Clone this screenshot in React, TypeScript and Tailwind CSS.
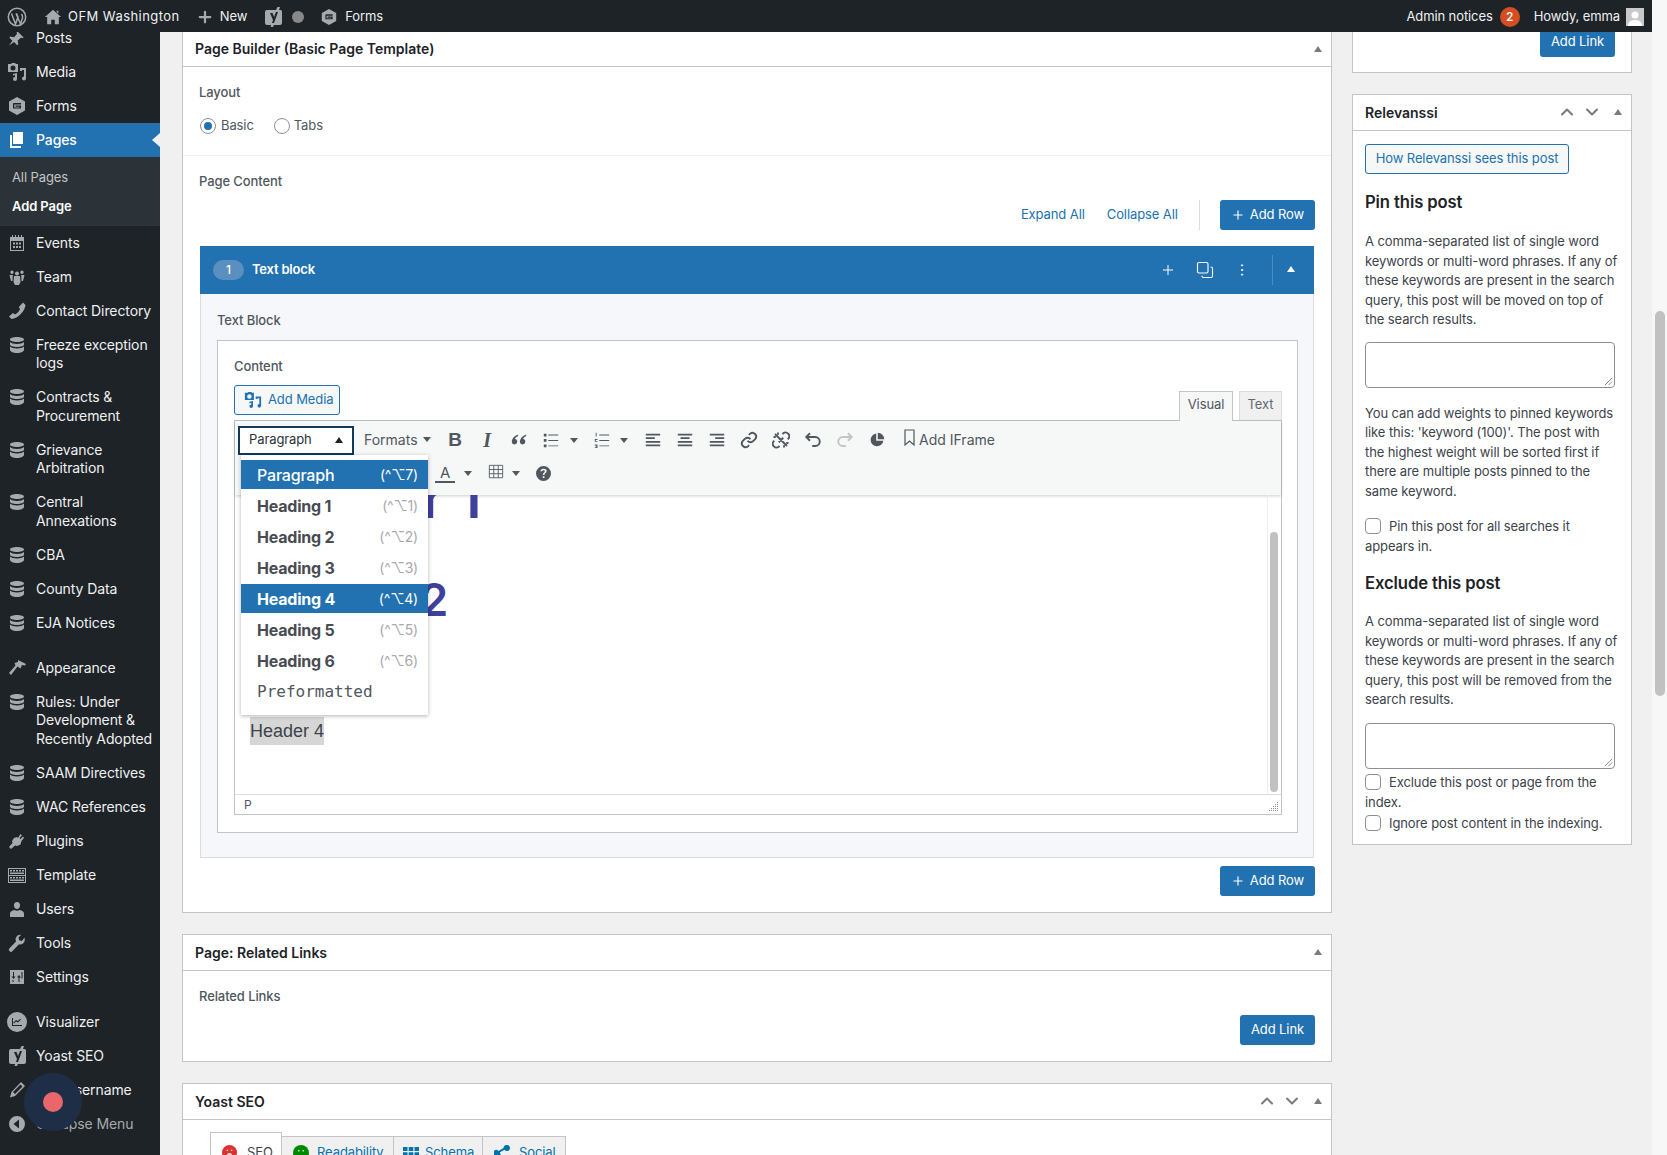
import { ChevronDown, ChevronUp, Copy, MoreVertical, Plus } from 'lucide-react';
import type { ReactNode } from 'react';

const blue = 'bg-[#2271b1]';

function Db() {
  return (
    <svg viewBox="0 0 20 20" className="h-5 w-5 fill-[#a7aaad]">
      <path d="M3 4.500C3 3 6 2 10 2s7 1 7 2.500S14 7 10 7 3 6 3 4.500zM3 7c1 1.300 4 2 7 2s6-.7 7-2v2.500C17 11 14 12 10 12S3 11 3 9.500zM3 11.500c1 1.300 4 2 7 2s6-.7 7-2V15c0 1.500-3 3-7 3s-7-1.500-7-3z" />
    </svg>
  );
}

function Icon({ d }: { d: string }) {
  return (
    <svg viewBox="0 0 20 20" className="h-5 w-5 fill-[#a7aaad]">
      <path fillRule="evenodd" d={d} />
    </svg>
  );
}

function MediaIcon({ cls }: { cls: string }) {
  return (
    <svg viewBox="0 0 20 20" className={cls}>
      <path fillRule="evenodd" d="M1 2h3l1-1h3l1 1h2v8H1zM6 3.500a2.500 2.500 0 1 0 0 5 2.500 2.500 0 0 0 0-5z" />
      <path d="M13 6h6v10.500a2 2 0 1 1-2-2V8h-2v1h-2zM6 12l4-1v6a2 2 0 1 1-2-2v-2l-2 .5z" />
    </svg>
  );
}

function FormsIcon({ cls }: { cls: string }) {
  return (
    <svg viewBox="0 0 20 20" className={cls}>
      <path fillRule="evenodd" d="M10 1l8 4.500v9L10 19l-8-4.500v-9zM6 8v4.500h8V9.500H8.500v1.200h4v.7H7.300V8.500H14V7H7a1 1 0 0 0-1 1z" />
    </svg>
  );
}

function YoastIcon({ cls }: { cls: string }) {
  return (
    <svg viewBox="0 0 20 20" className={cls}>
      <path fillRule="evenodd" d="M4 3h9l1.500-3h2.500l-1 3h1.500A1.500 1.500 0 0 1 19 4.500V16a2 2 0 0 1-2 2h-6l-1 2H7.500l.7-2H4a2 2 0 0 1-2-2V5a2 2 0 0 1 2-2zM7 6l3 7-1 3h2l4-11h-2l-2 5-1.500-4z" />
    </svg>
  );
}

function MenuItem({ icon, label, active }: { icon: ReactNode; label: ReactNode; active?: boolean }) {
  return (
    <li className={`relative flex gap-[9px] py-[7.825px] pl-[7px] text-[14px] leading-[18.400px] ${active ? `${blue} font-medium text-white` : 'text-[#f0f0f1]'}`}>
      <span className="flex h-[18px] w-5 shrink-0 items-center justify-center">{icon}</span>
      <span>{label}</span>
      {active && <span className="absolute right-0 top-[10px] h-0 w-0 border-y-[7px] border-r-[8px] border-y-transparent border-r-[#f0f0f1]" />}
    </li>
  );
}

function Sidebar() {
  return (
    <aside className="relative w-[160px] shrink-0 overflow-hidden bg-[#1d2327]">
      <ul className="-mt-[11px]">
        <MenuItem label="Posts" icon={<Icon d="M10.400 3.300l6.300 6.300-1.500.6-1-.6-3.500 3 .6 3.700-1.200 1-3-3.200L2 17.500l3.400-4.700-3-3 1-1.200 3.700.6 3-3.400-.6-1z" />} />
        <MenuItem label="Media" icon={<MediaIcon cls="h-5 w-5 fill-[#a7aaad]" />} />
        <MenuItem label="Forms" icon={<FormsIcon cls="h-5 w-5 fill-[#a7aaad]" />} />
        <MenuItem
          active
          label="Pages"
          icon={
            <svg viewBox="0 0 20 20" className="h-5 w-5 fill-white">
              <path d="M6 2h10v12H6zM3 5h2v11h9v2H3z" />
            </svg>
          }
        />
        <ul className="bg-[#2c3338] pb-[6px] pt-[5px] text-[13px] leading-[18px]">
          <li className="px-3 py-[5.500px] text-[#c3c4c7]">All Pages</li>
          <li className="px-3 py-[5.500px] font-semibold text-white">Add Page</li>
        </ul>
        <MenuItem label="Events" icon={<Icon d="M3 4h2V2h1v2h2V2h1v2h2V2h1v2h2V2h1v2h2v14H3zM4 8v9h12V8zM6 9.500h2v2H6zm3 0h2v2H9zm3 0h2v2h-2zM6 13h2v2H6zm3 0h2v2H9zm3 0h2v2h-2z" />} />
        <MenuItem label="Team" icon={<Icon d="M10 4.500a2 2 0 1 1 0 4 2 2 0 0 1 0-4zM5 3.500a1.700 1.700 0 1 1 0 3.400 1.700 1.700 0 0 1 0-3.400zM15 3.500a1.700 1.700 0 1 1 0 3.400 1.700 1.700 0 0 1 0-3.400zM7 9h6l.5 6-1.500 3H8l-1.500-3zM2.500 8h3.300L5.500 14H4zM14.200 8h3.300L16 14h-1.500z" />} />
        <MenuItem label="Contact Directory" icon={<Icon d="M16 1.500l2.500 2.500c-.5 6-7.500 13.500-14 14L2 15.500 6 12l2 1.500c2-1 4.500-3.500 5-5.500L11.800 6z" />} />
        <MenuItem label="Freeze exception logs" icon={<Db />} />
        <MenuItem label="Contracts & Procurement" icon={<Db />} />
        <MenuItem label="Grievance Arbitration" icon={<Db />} />
        <MenuItem label="Central Annexations" icon={<Db />} />
        <MenuItem label="CBA" icon={<Db />} />
        <MenuItem label="County Data" icon={<Db />} />
        <MenuItem label="EJA Notices" icon={<Db />} />
        <li className="h-[11px]" />
        <MenuItem label="Appearance" icon={<Icon d="M11 2l8 4-1 1.500-3-.5-1.500 3.500-3-2L4 17l-2-2 6.500-7.500-1-2.500L11 4z" />} />
        <MenuItem label={<>Rules: Under Development &amp; Recently Adopted</>} icon={<Db />} />
        <MenuItem label="SAAM Directives" icon={<Db />} />
        <MenuItem label="WAC References" icon={<Db />} />
        <MenuItem label="Plugins" icon={<Icon d="M13.500 3l1.500 1.500-2.500 2.500 1 1 2.500-2.500L17 7l-2.500 3-1 3.500-3.500 1.500-2-.5L4 18l-2-2 3.500-4-.5-2 2-3 3-1 1 1z" />} />
        <MenuItem label="Template" icon={<Icon d="M1 3h18v15H1zM2 4v6h16V4zM2 11v6h16v-6zM3 5h2v1.500H3zm3 0h2v1.500H6zm3 0h2v1.500H9zm3 0h2v1.500h-2zm3 0h2v1.500h-2zM3 7.500h14V9H3zM3 12h2v1.500H3zm3 0h2v1.500H6zm3 0h2v1.500H9zm3 0h2v1.500h-2zm3 0h2v1.500h-2zM3 14.500h14V16H3z" />} />
        <MenuItem label="Users" icon={<Icon d="M10 3a3 3 0 0 1 3 3.500c0 2-1.300 3.500-3 3.500S7 8.500 7 6.500A3 3 0 0 1 10 3zM3 18v-3.500c0-2 2-3 4.500-3.500 1.500 1 3.500 1 5 0 2.500.5 4.500 1.500 4.500 3.500V18z" />} />
        <MenuItem label="Tools" icon={<Icon d="M17.500 4.500l.3 2.500a4.500 4.500 0 0 1-5.800 4.200L5.500 18a2 2 0 0 1-3.200-2.500L9 8.500A4.500 4.500 0 0 1 14 2l-2.500 2.500.7 2.700 2.700.7z" />} />
        <MenuItem label="Settings" icon={<Icon d="M3 3h14v14H3zM6 5v4.500H4.500L6.500 12l2-2.500H7V5zm5.500 10h1v-4.500H14L12 8l-2 2.500h1.500zm3-10v6.500h1V5zm-9 8v2h1v-2z" />} />
        <li className="h-[11px]" />
        <MenuItem label="Visualizer" icon={<Icon d="M10 0a10 10 0 1 1 0 20 10 10 0 0 1 0-20zM5 6v8h10v-1H6V6zm2 5.500l2-2 2 1 3-3-.7-.7L11 9l-2-1-2.700 2.700z" />} />
        <MenuItem label="Yoast SEO" icon={<YoastIcon cls="h-5 w-5 fill-[#a7aaad]" />} />
        <MenuItem label="Edit Username" icon={<Icon d="M14 2l4 4-10 10-5 1.500L4.500 12zM13.500 4.500L6 12l2 2 7.500-7.500z" />} />
        <li className="flex gap-[9px] py-[7.825px] pl-[7px] text-[14px] leading-[18.400px] text-[#a7aaad]">
          <span className="flex h-[18px] w-5 items-center justify-center">
            <Icon d="M10 2a8 8 0 1 1 0 16 8 8 0 0 1 0-16zm2 3.500L6.500 10l5.500 4.500z" />
          </span>
          Collapse Menu
        </li>
      </ul>
      <div className="absolute left-[24px] top-[1041px] flex h-[58px] w-[58px] items-center justify-center rounded-full bg-[#1f2e47]">
        <div className="h-5 w-5 rounded-full bg-[#e9666a]" />
      </div>
    </aside>
  );
}

function TopBar() {
  return (
    <header className="relative z-10 flex h-8 shrink-0 items-center bg-[#1d2327] pt-px text-[13px] text-[#f0f0f1]">
      <svg viewBox="0 0 20 20" className="ml-[7px] h-5 w-5 fill-none stroke-[#a7aaad] stroke-[1.500]">
        <circle cx="10" cy="10" r="8.700" />
        <path d="M4.500 6.500l4 10.500 2.500-7-1.500-3.500M9 6.500l4.500 10.500 2-6c.5-2-.5-3-1-4" />
      </svg>
      <svg viewBox="0 0 20 20" className="ml-[17px] h-[18px] w-[18px] fill-[#a7aaad]">
        <path d="M10 2l9 8h-2.500v8H12v-5H8v5H3.500v-8H1zM14 3h2v3l-2-1.500z" />
      </svg>
      <span className="ml-[6px] tracking-[0.450px]">OFM Washington</span>
      <Plus size={18} strokeWidth={3} className="ml-[16px] text-[#a7aaad]" />
      <span className="ml-[6px]">New</span>
      <YoastIcon cls="ml-[16px] h-5 w-5 fill-[#a7aaad]" />
      <span className="ml-[9px] h-3 w-3 rounded-full bg-[#888]" />
      <FormsIcon cls="ml-[16px] h-[18px] w-[18px] fill-[#a7aaad]" />
      <span className="ml-[7px]">Forms</span>
      <div className="ml-auto flex items-center pr-[8px]">
        <span>Admin notices</span>
        <span className="ml-[7px] flex h-5 w-5 items-center justify-center rounded-full bg-[#d54e21] text-[12px] font-medium text-white">2</span>
        <span className="ml-[14px]">Howdy, emma</span>
        <span className="ml-[6px] flex h-[18px] w-[18px] items-end justify-center bg-[#c9c9c9]">
          <svg viewBox="0 0 18 18" className="h-[18px] w-[18px] fill-white">
            <circle cx="9" cy="7" r="3.500" />
            <path d="M2 18c0-4 3-6 7-6s7 2 7 6z" />
          </svg>
        </span>
      </div>
    </header>
  );
}

function Caret({ up = true, cls = 'border-b-[#50575e]' }: { up?: boolean; cls?: string }) {
  return up ? (
    <span className={`inline-block h-0 w-0 border-x-[4px] border-b-[6px] border-x-transparent ${cls}`} />
  ) : (
    <span className="inline-block h-0 w-0 border-x-[4px] border-t-[5px] border-x-transparent border-t-[#50575e]" />
  );
}

function CardHead({ title, arrows, first }: { title: string; arrows?: boolean; first?: boolean }) {
  return (
    <div className={`flex ${first ? 'h-[35px]' : 'h-[36px]'} items-center border-b border-[#c3c4c7] pb-px pl-3 pr-[9px] text-[14px] font-semibold tracking-normal text-[#1d2327]`}>
      <span>{title}</span>
      <div className="ml-auto flex items-center gap-[5px] text-[#787c82]">
        {arrows && <ChevronUp size={20} strokeWidth={2.500} />}
        {arrows && <ChevronDown size={20} strokeWidth={2.500} />}
        <span className="ml-[7px] inline-flex"><Caret cls="border-b-[#787c82]" /></span>
      </div>
    </div>
  );
}

function AddBtn({ children, plus }: { children: string; plus?: boolean }) {
  return (
    <button type="button" className={`flex h-[30px] items-center gap-[5px] rounded-[3px] ${blue} px-[11px] text-[13px] text-white`}>
      {plus && <Plus size={14} strokeWidth={2} />}
      {children}
    </button>
  );
}

function ToolIcon({ children }: { children: ReactNode }) {
  return <span className="flex h-[28px] w-[32px] shrink-0 items-center justify-center text-[#50575e]">{children}</span>;
}

function Lines({ kind }: { kind: 'left' | 'center' | 'right' }) {
  const d = {
    left: 'M2 3h16v2H2zM2 7h10v2H2zM2 11h16v2H2zM2 15h16v2H2z',
    center: 'M2 3h16v2H2zM5 7h10v2H5zM2 11h16v2H2zM2 15h16v2H2z',
    right: 'M2 3h16v2H2zM8 7h10v2H8zM2 11h16v2H2zM2 15h16v2H2z',
  }[kind];
  return (
    <svg viewBox="0 0 20 20" className="h-[18px] w-[18px] fill-[#50575e]">
      <path d={d} />
    </svg>
  );
}

function Toolbar() {
  return (
    <div className="h-[74px] bg-[#f6f7f7] shadow-[0_1px_3px_rgba(0,0,0,0.2)]">
      <div className="flex h-[38px] items-center pl-[3px]">
        <div className="flex h-[29px] w-[116px] items-center justify-between border-2 border-[#0f3a5c] bg-white px-[9px] text-[13px] text-[#2c3338]">
          Paragraph
          <Caret cls="border-b-[#1d2327]" />
        </div>
        <span className="mb-px ml-[10px] flex w-[75px] items-center gap-[5px] text-[14px] tracking-normal text-[#50575e]">
          Formats <Caret up={false} />
        </span>
        <ToolIcon><span className="font-['Liberation_Sans',sans-serif] text-[19px] font-bold">B</span></ToolIcon>
        <ToolIcon><span className="font-['Liberation_Serif',serif] text-[20px] font-bold italic">I</span></ToolIcon>
        <ToolIcon>
          <svg viewBox="0 0 20 20" className="h-[18px] w-[18px] fill-[#50575e]"><path d="M9 4C6 5 2 8 2 12a3 3 0 1 0 3.500-3c0-1 1.500-2.500 3.500-3.500zM18 4c-3 1-7 4-7 8a3 3 0 1 0 3.500-3c0-1 1.500-2.500 3.500-3.500z" /></svg>
        </ToolIcon>
        <ToolIcon>
          <svg viewBox="0 0 20 20" className="h-[18px] w-[18px] fill-[#50575e]"><path d="M2 3h3v3H2zM7 4h11v1H7zM2 9h3v3H2zM7 10h11v1H7zM2 15h3v3H2zM7 16h11v1H7z" /></svg>
        </ToolIcon>
        <span className="ml-[2px] flex w-[10px] justify-center"><Caret up={false} /></span>
        <span className="ml-[7px]"><ToolIcon>
          <svg viewBox="0 0 20 20" className="h-[18px] w-[18px] fill-[#50575e]"><path d="M3 2h1v4H3zM2 9h3v1H3v1h2v1H2zM2 15h3v4H2v-1h2v-.5H3v-1h1V16H2zM7 4h11v1H7zM7 10h11v1H7zM7 16h11v1H7z" /></svg>
        </ToolIcon></span>
        <span className="ml-px flex w-[10px] justify-center"><Caret up={false} /></span>
        <span className="ml-[8px] flex items-center">
          <ToolIcon><Lines kind="left" /></ToolIcon>
          <ToolIcon><Lines kind="center" /></ToolIcon>
          <ToolIcon><Lines kind="right" /></ToolIcon>
        </span>
        <ToolIcon>
          <svg viewBox="0 0 24 24" className="h-[18px] w-[18px] fill-none stroke-[#50575e] stroke-[2.500]"><path d="M10 13a5 5 0 0 0 7.500.5l3-3a5 5 0 0 0-7-7l-1.700 1.700" /><path d="M14 11a5 5 0 0 0-7.500-.5l-3 3a5 5 0 0 0 7 7l1.700-1.700" /></svg>
        </ToolIcon>
        <ToolIcon>
          <svg viewBox="0 0 24 24" className="h-[18px] w-[18px] fill-none stroke-[#50575e] stroke-[2.500]"><path d="M14 4l1-1a5 5 0 0 1 7 7l-1 1M10 20l-1 1a5 5 0 0 1-7-7l1-1M9 15l6-6M4 4l16 16M8 2v3M2 8h3M16 22v-3M22 16h-3" /></svg>
        </ToolIcon>
        <ToolIcon>
          <svg viewBox="0 0 24 24" className="h-[18px] w-[18px] fill-none stroke-[#50575e] stroke-[2.500]"><path d="M8 3L3 8l5 5M3 8h12a6 6 0 0 1 0 12h-4" /></svg>
        </ToolIcon>
        <ToolIcon>
          <svg viewBox="0 0 24 24" className="h-[18px] w-[18px] fill-none stroke-[#c3c4c7] stroke-[2.500]"><path d="M16 3l5 5-5 5M21 8H9a6 6 0 0 0 0 12h4" /></svg>
        </ToolIcon>
        <ToolIcon>
          <svg viewBox="0 0 20 20" className="h-4 w-4 fill-[#50575e]"><path d="M9 2v9h9a8 8 0 1 1-9-9zM11 1a8 8 0 0 1 8 8h-8z" /></svg>
        </ToolIcon>
        <span className="mb-px ml-[11px] flex items-center gap-1 text-[14px] tracking-normal text-[#50575e]">
          <svg viewBox="0 0 11 17" className="mb-1 h-[17px] w-[11px] fill-none stroke-[#50575e] stroke-[1.200]"><path d="M1 1h9v15l-4.500-4L1 16z" /></svg>
          Add IFrame
        </span>
      </div>
      <div className="flex h-[29px] items-center pl-[200px]">
        <span className="flex w-5 flex-col items-center text-[15px] leading-[17px] text-[#50575e]">
          A
          <span className="h-[2px] w-5 bg-[#50575e]" />
        </span>
        <span className="ml-[9px] inline-flex"><Caret up={false} /></span>
        <svg viewBox="0 0 18 18" className="mb-1 ml-[16px] h-4 w-4 fill-none stroke-[#50575e]">
          <path d="M1.500 1.500h15v14h-15zM1.500 6.200h15M1.500 10.900h15M6.500 1.500v14M11.500 1.500v14" />
        </svg>
        <span className="ml-[8px] inline-flex"><Caret up={false} /></span>
        <svg viewBox="0 0 20 20" className="ml-[16px] h-[15px] w-[15px] fill-[#50575e]">
          <path fillRule="evenodd" d="M10 0a10 10 0 1 1 0 20 10 10 0 0 1 0-20zM9 12h2.200c0-2.500 3-2.500 3-5.200C14.200 4.500 12.400 3.500 10 3.500S6 4.800 5.800 7h2.400c.1-1 .8-1.500 1.800-1.500s1.800.5 1.800 1.400C12 8.500 9 9 9 12zm0 1.500V16h2.300v-2.500z" />
        </svg>
      </div>
    </div>
  );
}

const formats = [
  { label: 'Paragraph', key: '(^⌥7)', cls: 'font-medium text-white', on: true },
  { label: 'Heading 1', key: '(^⌥1)', cls: 'font-bold text-[#484c52]' },
  { label: 'Heading 2', key: '(^⌥2)', cls: 'font-bold text-[#484c52]' },
  { label: 'Heading 3', key: '(^⌥3)', cls: 'font-bold text-[#484c52]' },
  { label: 'Heading 4', key: '(^⌥4)', cls: 'font-bold text-white', on: true },
  { label: 'Heading 5', key: '(^⌥5)', cls: 'font-bold text-[#484c52]' },
  { label: 'Heading 6', key: '(^⌥6)', cls: 'font-bold text-[#484c52]' },
];

function FormatMenu() {
  return (
    <div className="absolute left-[6px] top-[34px] z-10 w-[187px] bg-white pb-[9px] pt-[5px] shadow-[0_1px_4px_rgba(0,0,0,0.3)]">
      {formats.map((f) => (
        <div key={f.label} className={`mb-[2px] flex h-[29px] items-center justify-between pl-4 pr-[10px] text-[16px] tracking-[-0.200px] ${f.on ? blue : ''} ${f.cls}`}>
          {f.label}
          <span className={`text-[14px] font-normal ${f.on ? 'text-white' : 'text-[#a7aaad]'}`}>{f.key}</span>
        </div>
      ))}
      <div className="flex h-[29px] items-center pl-4 font-['DejaVu_Sans_Mono',monospace] text-[16px] tracking-normal text-[#50575e]">Preformatted</div>
    </div>
  );
}

function Editor() {
  return (
    <div className="relative h-[395px] border border-[#c3c4c7]">
      <Toolbar />
      <FormatMenu />
      <div className="flex h-[300px] overflow-hidden border-b border-[#dcdcde]">
        <div className="min-w-0 flex-1 pl-[15px] font-semibold tracking-normal text-[#3f3f9c]">
          <div className="-mt-[30px] h-[66px] whitespace-nowrap text-[55px] leading-[66px]">Header 1</div>
          <div className="mt-[41px] h-[56px] whitespace-nowrap text-[45px] leading-[56px]">Header 2</div>
          <div className="mt-[22px] h-[36px] text-[24px] leading-[36px]">Header 3</div>
          <div className="mt-[31px] w-fit bg-[#d6d6d6] font-['Liberation_Sans',sans-serif] text-[18px] font-normal leading-[28px] text-[#3c434a]">Header 4</div>
        </div>
        <div className="w-[14px] shrink-0 border-l border-[#eee] px-[2px] pt-[37px]">
          <div className="h-[260px] w-[8px] rounded-full bg-[#c1c1c1]" />
        </div>
      </div>
      <div className="relative flex h-[19px] items-center pl-[9px] text-[12px] text-[#50575e]">
        P
        <svg viewBox="0 0 10 10" className="absolute bottom-[2px] right-[2px] h-[10px] w-[10px] fill-[#8c8f94]">
          <path d="M8 0h1v1H8zM6 2h1v1H6zM8 2h1v1H8zM4 4h1v1H4zM6 4h1v1H6zM8 4h1v1H8zM2 6h1v1H2zM4 6h1v1H4zM6 6h1v1H6zM8 6h1v1H8zM0 8h1v1H0zM2 8h1v1H2zM4 8h1v1H4zM6 8h1v1H6zM8 8h1v1H8z" />
        </svg>
      </div>
    </div>
  );
}

function PageBuilder() {
  return (
    <section className="h-[881px] border border-t-0 border-[#c3c4c7] bg-white">
      <CardHead title="Page Builder (Basic Page Template)" first />
      <div className="h-[89px] border-b border-[#f0f0f1] px-4 pt-[15px] text-[13px] text-[#50575e]">
        <div className="font-medium leading-[20px]">Layout</div>
        <div className="ml-px mt-[14px] flex items-center">
          <span className="flex h-4 w-4 items-center justify-center rounded-full border border-[#8c8f94]">
            <span className="h-2 w-2 rounded-full bg-[#2271b1]" />
          </span>
          <span className="ml-[5px]">Basic</span>
          <span className="ml-[20px] h-4 w-4 rounded-full border border-[#8c8f94]" />
          <span className="ml-[4px]">Tabs</span>
        </div>
      </div>
      <div className="px-4 pt-[15px]">
        <div className="text-[13px] font-medium leading-[20px] text-[#50575e]">Page Content</div>
        <div className="mt-[9px] flex h-[30px] items-center justify-end text-[13px] text-[#2271b1]">
          <span>Expand All</span>
          <span className="ml-[22px]">Collapse All</span>
          <span className="ml-[21px] mr-[20px] h-[30px] w-px bg-[#dcdcde]" />
          <AddBtn plus>Add Row</AddBtn>
        </div>
        <div className="ml-px mt-[16px] w-[1114px] border border-t-0 border-[#dcdcde] bg-[#f6f7fb]">
          <div className={`-mx-px flex h-[48px] items-center ${blue} pl-[13px] pr-[19px] text-white`}>
            <span className="flex h-5 w-[31px] items-center justify-center rounded-full bg-[#5a8fbf] text-[12px] font-medium">1</span>
            <span className="ml-[8px] text-[13px] font-semibold tracking-[-0.200px]">Text block</span>
            <div className="ml-auto flex items-center">
              <Plus size={16} strokeWidth={1.500} />
              <Copy size={18} strokeWidth={1.500} className="ml-[20px] -scale-x-100 -scale-y-100" />
              <MoreVertical size={16} strokeWidth={1.500} className="ml-[20px]" />
              <span className="ml-[22px] h-[30px] w-px bg-[#4a8bc0]" />
              <span className="mb-[3px] ml-[14px] inline-flex"><Caret cls="border-b-white" /></span>
            </div>
          </div>
          <div className="h-[563px] pl-4 pr-[15px] pt-[16px]">
            <div className="text-[13px] font-medium leading-[20px] text-[#50575e]">Text Block</div>
            <div className="mt-[10px] h-[493px] border border-[#c3c4c7] bg-white pl-4 pr-[15px] pt-[15px]">
              <div className="text-[13px] font-medium leading-[20px] text-[#50575e]">Content</div>
              <div className="flex items-end justify-between">
                <button type="button" className="mb-[5px] mt-[9px] flex h-[30px] w-[106px] items-center gap-[6px] rounded-[3px] border border-[#2271b1] bg-[#f6f7f7] pl-[9px] text-[13px] text-[#2271b1]">
                  <MediaIcon cls="h-[18px] w-[18px] fill-[#2271b1]" />
                  Add Media
                </button>
                <div className="-mb-px flex items-end text-[13px] text-[#50575e]">
                  <span className="z-10 flex h-[30px] w-[54px] items-center justify-center border border-b-0 border-[#c3c4c7] bg-[#f6f7f7] pb-[3px]">Visual</span>
                  <span className="ml-[6px] flex h-[30px] w-[43px] items-center justify-center border border-[#dcdcde] bg-[#f0f0f1] pb-[3px] text-[#646970]">Text</span>
                </div>
              </div>
              <Editor />
            </div>
          </div>
        </div>
        <div className="mt-[8px] flex justify-end">
          <AddBtn plus>Add Row</AddBtn>
        </div>
      </div>
    </section>
  );
}

function SideCheck({ children }: { children: ReactNode }) {
  return (
    <div className="text-[13px] leading-[20px] text-[#3c434a]">
      <span className="mr-2 inline-block h-4 w-4 translate-y-[3px] rounded-[4px] border border-[#8c8f94] bg-white" />
      {children}
    </div>
  );
}

function SideArea() {
  return (
    <div className="relative h-[46px] w-[250px] rounded-[4px] border border-[#8c8f94]">
      <svg viewBox="0 0 10 10" className="absolute bottom-px right-px h-[9px] w-[9px] fill-none stroke-[#787c82]">
        <path d="M1 9l8-8M5 9l4-4" />
      </svg>
    </div>
  );
}

function Relevanssi() {
  return (
    <section className="mt-[21px] h-[751px] border border-[#c3c4c7] bg-white">
      <CardHead title="Relevanssi" arrows />
      <div className="px-3 pt-[13px] text-[13px] leading-[19.500px] text-[#3c434a]">
        <button type="button" className="block h-[30px] w-[204px] rounded-[3px] border border-[#2271b1] bg-[#f6f7f7] text-[13px] text-[#2271b1]">How Relevanssi sees this post</button>
        <h3 className="mt-[16px] text-[16.640px] font-semibold leading-[24px] text-[#1d2327]">Pin this post</h3>
        <p className="mt-[18px]">A comma-separated list of single word keywords or multi-word phrases. If any of these keywords are present in the search query, this post will be moved on top of the search results.</p>
        <div className="mt-[12px]"><SideArea /></div>
        <p className="mt-[16px]">You can add weights to pinned keywords like this: 'keyword (100)'. The post with the highest weight will be sorted first if there are multiple posts pinned to the same keyword.</p>
        <div className="mt-[14px]"><SideCheck>Pin this post for all searches it appears in.</SideCheck></div>
        <h3 className="mt-[15px] text-[16.640px] font-semibold leading-[24px] text-[#1d2327]">Exclude this post</h3>
        <p className="mt-[17px]">A comma-separated list of single word keywords or multi-word phrases. If any of these keywords are present in the search query, this post will be removed from the search results.</p>
        <div className="mt-[13px]"><SideArea /></div>
        <div className="mt-[2px]"><SideCheck>Exclude this post or page from the index.</SideCheck></div>
        <SideCheck>Ignore post content in the indexing.</SideCheck>
      </div>
    </section>
  );
}

function YoastTabs() {
  return (
    <div className="mt-[12px] flex h-[60px] items-start pl-[27px] text-[13px]">
      <span className="flex h-[50px] w-[72px] items-start gap-[10px] border border-[#c3c4c7] bg-white pl-[11px] pt-[10px] text-[#3c434a]">
        <svg viewBox="0 0 16 16" className="mt-[2px] h-[15px] w-[15px] shrink-0">
          <circle cx="8" cy="8" r="8" fill="#dc3232" />
          <path d="M5 5h1.500v1.500H5zM9.500 5H11v1.500H9.500zM5 11.500a3 3 0 0 1 6 0z" fill="#f6d5d5" />
        </svg>
        SEO
      </span>
      <span className="mt-[4px] flex h-[46px] w-[112px] items-start gap-[8px] border border-l-0 border-[#c3c4c7] bg-[#f0f0f1] pl-[11px] pt-[6px] text-[#0073aa]">
        <svg viewBox="0 0 16 16" className="mt-[2px] h-4 w-4 shrink-0">
          <circle cx="8" cy="8" r="8" fill="#008a00" />
          <path d="M5 5h1.500v1.500H5zM9.500 5H11v1.500H9.500z" fill="#c8e6c8" />
        </svg>
        Readability
      </span>
      <span className="mt-[4px] flex h-[46px] w-[89px] items-start gap-[6px] border border-l-0 border-[#c3c4c7] bg-[#f0f0f1] pl-[9px] pt-[6px] text-[#0073aa]">
        <svg viewBox="0 0 16 16" className="mt-[2px] h-4 w-4 shrink-0 fill-[#0073aa]">
          <path d="M0 2h4.500v4H0zM5.700 2h4.600v4H5.700zM11.500 2H16v4h-4.500zM0 7.200h4.500v4H0zM5.700 7.200h4.600v4H5.700zM11.500 7.200H16v4h-4.500z" />
        </svg>
        Schema
      </span>
      <span className="mt-[4px] flex h-[46px] w-[83px] items-start gap-[9px] border border-l-0 border-[#c3c4c7] bg-[#f0f0f1] pl-[11px] pt-[6px] text-[#0073aa]">
        <svg viewBox="0 0 16 16" className="mt-[2px] h-4 w-4 shrink-0 fill-[#0073aa]">
          <path d="M13 0a3 3 0 1 1-2.500 4.700L6 7.300a3 3 0 0 1 0 1.400l1 .6-1 1.500L4.500 10A3 3 0 1 1 4.500 6l5-3A3 3 0 0 1 13 0z" />
        </svg>
        Social
      </span>
    </div>
  );
}

export default function App() {
  return (
    <div className="flex h-[1155px] overflow-hidden bg-[#f0f0f1] font-['Inter',sans-serif] tracking-[-0.100px]">
      <div className="flex w-[1652px] shrink-0 flex-col">
        <TopBar />
        <div className="flex min-h-0 flex-1">
          <Sidebar />
          <main className="flex min-w-0 flex-1 overflow-hidden pl-[22px]">
            <div className="w-[1150px] shrink-0">
              <PageBuilder />
              <section className="mt-[21px] h-[128px] border border-[#c3c4c7] bg-white">
                <CardHead title="Page: Related Links" />
                <div className="px-4 pt-[15px] text-[13px] font-medium leading-[20px] text-[#50575e]">Related Links</div>
                <div className="mt-[9px] flex justify-end pr-4">
                  <AddBtn>Add Link</AddBtn>
                </div>
              </section>
              <section className="mt-[21px] h-[200px] border border-[#c3c4c7] bg-white">
                <CardHead title="Yoast SEO" arrows />
                <YoastTabs />
              </section>
            </div>
            <div className="ml-5 w-[280px] shrink-0">
              <section className="flex h-[41px] items-start justify-end border border-t-0 border-[#c3c4c7] bg-white pr-4">
                <div className="-mt-[5px]">
                  <AddBtn>Add Link</AddBtn>
                </div>
              </section>
              <Relevanssi />
            </div>
          </main>
        </div>
      </div>
      <div className="flex w-[15px] shrink-0 justify-center bg-[#f7f7f7] pt-[311px]">
        <div className="h-[385px] w-[10px] rounded-full bg-[#c1c1c1]" />
      </div>
    </div>
  );
}
